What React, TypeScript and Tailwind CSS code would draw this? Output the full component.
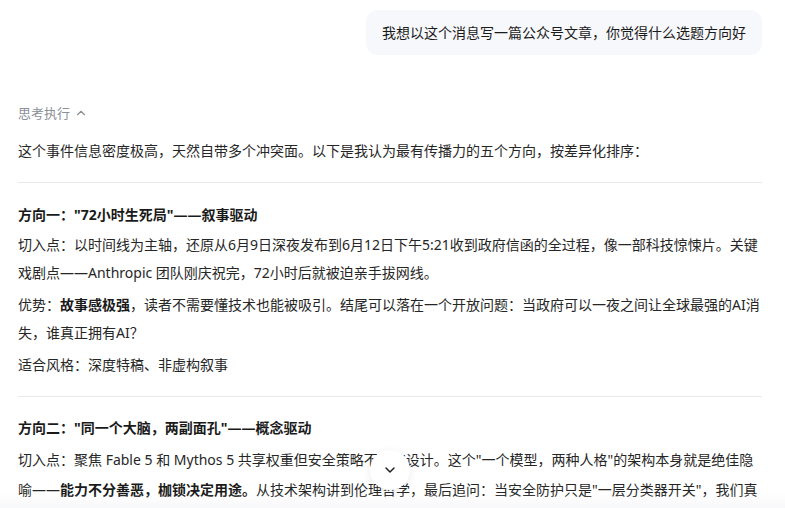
import { ChevronDown, ChevronUp } from 'lucide-react';

function Para({ children, className = '' }: { children: React.ReactNode; className?: string }) {
  return <p className={`text-[14px] leading-[28px] text-[#262626] ${className}`}>{children}</p>;
}

function Heading({ children }: { children: React.ReactNode }) {
  return <h3 className="text-[14px] leading-[24px] font-bold text-[#1a1a1a]">{children}</h3>;
}

export default function App() {
  return (
    <div className="relative h-[508px] w-[785px] overflow-hidden bg-white font-['Noto_Sans','Noto_Sans_CJK_SC',sans-serif]">
      <div className="flex flex-col px-[18px] pt-[10px]">
        {/* user message */}
        <div className="flex justify-end pr-[5px]">
          <div className="rounded-[12px] bg-[#f7f8fc] px-[16px] py-[11px] text-[14px] leading-[23px] text-[#1a1a1a]">
            我想以这个消息写一篇公众号文章，你觉得什么选题方向好
          </div>
        </div>

        {/* assistant answer */}
        <div className="mt-[48px] flex items-center gap-[4px] text-[13px] leading-[20px] text-[#8b8f98]">
          <span>思考执行</span>
          <ChevronUp size={14} strokeWidth={2} />
        </div>

        <Para className="mt-[14px]">
          这个事件信息密度极高，天然自带多个冲突面。以下是我认为最有传播力的五个方向，按差异化排序：
        </Para>

        <div className="mt-[17px] h-px w-[744px] bg-[#e8e9ec]" />

        <div className="mt-[20px] flex w-[744px] flex-col gap-[4px]">
          <Heading>方向一："72小时生死局"——叙事驱动</Heading>
          <Para>
            切入点：以时间线为主轴，还原从6月9日深夜发布到6月12日下午5:21收到政府信函的全过程，像一部科技惊悚片。关键戏剧点——Anthropic 团队刚庆祝完，72小时后就被迫亲手拔网线。
          </Para>
          <Para>
            优势：<b className="font-bold text-[#1a1a1a]">故事感极强</b>，读者不需要懂技术也能被吸引。结尾可以落在一个开放问题：当政府可以一夜之间让全球最强的AI消失，谁真正拥有AI？
          </Para>
          <Para>适合风格：深度特稿、非虚构叙事</Para>
        </div>

        <div className="mt-[17px] h-px w-[744px] bg-[#e8e9ec]" />

        <div className="mt-[19px] flex w-[744px] flex-col gap-[5px]">
          <Heading>方向二："同一个大脑，两副面孔"——概念驱动</Heading>
          <Para className="leading-[30px]">
            切入点：聚焦 Fable 5 和 Mythos 5 共享权重但安全策略不同的设计。这个"一个模型，两种人格"的架构本身就是绝佳隐喻——
            <b className="font-bold text-[#1a1a1a]">能力不分善恶，枷锁决定用途。</b>
            从技术架构讲到伦理哲学，最后追问：当安全防护只是"一层分类器开关"，我们真正信任的到底是什么？
          </Para>
        </div>
      </div>

      {/* bottom fade */}
      <div className="pointer-events-none absolute inset-x-0 bottom-0 h-[14px] bg-gradient-to-b from-transparent to-[#f4f5f8]/70" />

      {/* scroll to bottom */}
      <button
        type="button"
        className="absolute left-[370px] top-[450px] flex h-[40px] w-[40px] items-center justify-center rounded-full bg-white text-[#1f1f1f] shadow-[0_2px_10px_rgba(0,0,0,0.08)]"
      >
        <ChevronDown size={16} strokeWidth={2.2} />
      </button>
    </div>
  );
}
